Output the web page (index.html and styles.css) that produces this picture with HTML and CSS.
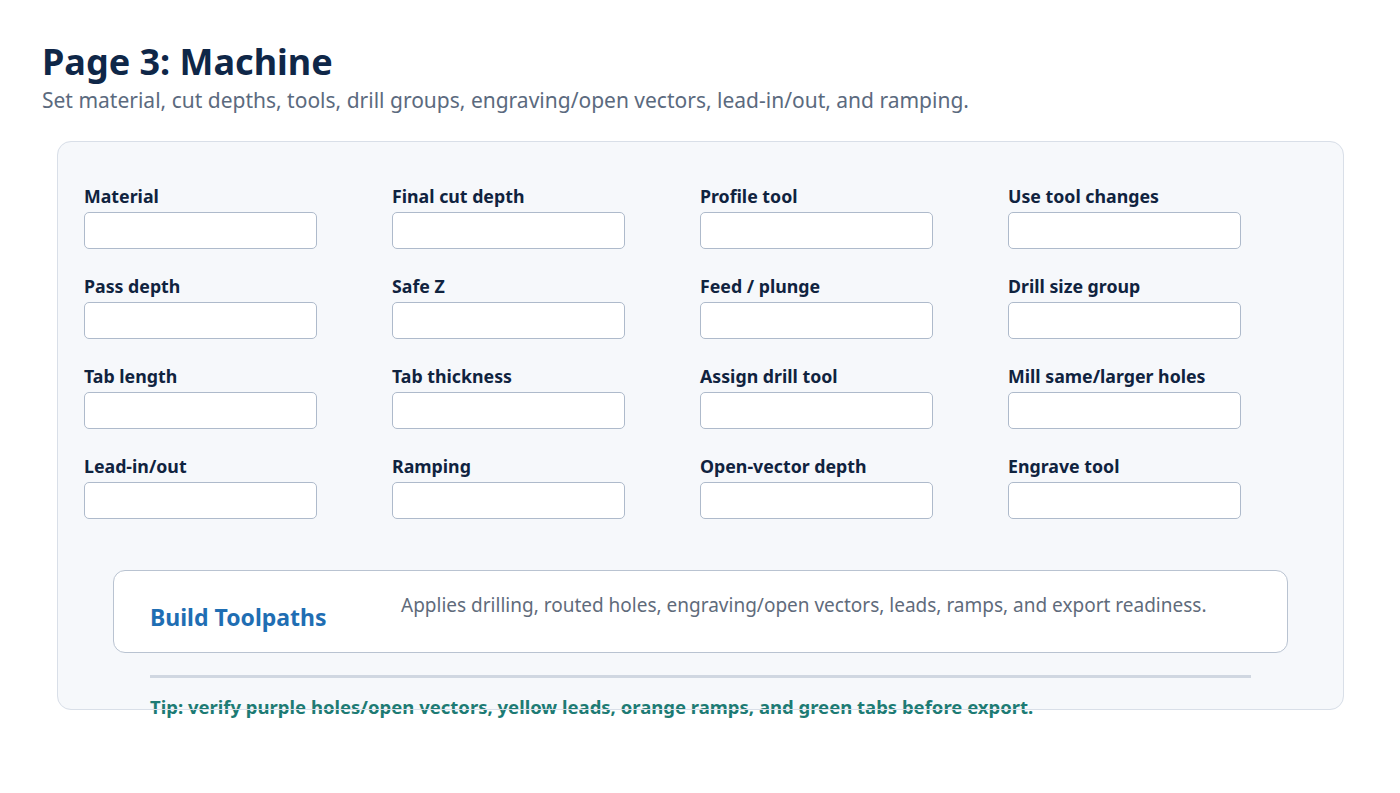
FILE: index.html
```html
<!DOCTYPE html>
<html lang="en">
<head>
    <meta charset="UTF-8">
    <meta name="viewport" content="width=device-width, initial-scale=1.0">
    <title>Page 3: Machine</title>
    <link rel="stylesheet" href="styles.css">
</head>
<body>
    <div class="page">
        <h1 class="title">Page 3: Machine</h1>
        <p class="subtitle">Set material, cut depths, tools, drill groups, engraving/open vectors, lead-in/out, and ramping.</p>

        <div class="panel">
            <!-- Machine settings -->
            <div class="fields">
                <label class="field"><span>Material</span><input type="text"></label>
                <label class="field"><span>Final cut depth</span><input type="text"></label>
                <label class="field"><span>Profile tool</span><input type="text"></label>
                <label class="field"><span>Use tool changes</span><input type="text"></label>

                <label class="field"><span>Pass depth</span><input type="text"></label>
                <label class="field"><span>Safe Z</span><input type="text"></label>
                <label class="field"><span>Feed / plunge</span><input type="text"></label>
                <label class="field"><span>Drill size group</span><input type="text"></label>

                <label class="field"><span>Tab length</span><input type="text"></label>
                <label class="field"><span>Tab thickness</span><input type="text"></label>
                <label class="field"><span>Assign drill tool</span><input type="text"></label>
                <label class="field"><span>Mill same/larger holes</span><input type="text"></label>

                <label class="field"><span>Lead-in/out</span><input type="text"></label>
                <label class="field"><span>Ramping</span><input type="text"></label>
                <label class="field"><span>Open-vector depth</span><input type="text"></label>
                <label class="field"><span>Engrave tool</span><input type="text"></label>
            </div>

            <!-- Build action -->
            <div class="build">
                <h3 class="build-title">Build Toolpaths</h3>
                <p class="build-desc">Applies drilling, routed holes, engraving/open vectors, leads, ramps, and export readiness.</p>
            </div>

            <div class="divider"></div>
            <p class="tip">Tip: verify purple holes/open vectors, yellow leads, orange ramps, and green tabs before export.</p>
        </div>
    </div>
</body>
</html>
```

FILE: styles.css
```css
html, body {
    min-height: 100%;
}
body {
    margin: 0;
    font-family: 'Noto Sans', 'Open Sans', sans-serif;
    background-color: #fff;
}
.page {
    padding: 38px 56px 84px 42px;
}
.title {
    margin: 0;
    font-size: 36px;
    line-height: 48px;
    font-weight: bold;
    color: #0f2748;
}
.subtitle {
    margin: 0;
    font-size: 21px;
    line-height: 28px;
    color: #5b6a7e;
}
.panel {
    position: relative;
    box-sizing: border-box;
    height: 569px;
    margin: 27px 0 0 15px;
    padding: 45px 27px 0;
    background: #f6f8fb;
    border-radius: 14px;
}
/* border sits on top, so the tip line runs under it */
.panel::after {
    content: '';
    position: absolute;
    inset: 0;
    border: 1px solid #d9dfe8;
    border-radius: 14px;
    pointer-events: none;
}
.fields {
    display: grid;
    grid-template-columns: repeat(4, 233px);
    column-gap: 75px;
    row-gap: 27px;
}
.field {
    display: flex;
    flex-direction: column;
    gap: 6px;
}
.field span {
    font-size: 17.75px;
    line-height: 20px;
    font-weight: bold;
    color: #10233f;
}
.field input {
    box-sizing: border-box;
    height: 37px;
    margin: 0;
    border: 1px solid #aebacb;
    border-radius: 5px;
    background: #fff;
}
.build {
    display: flex;
    align-items: flex-start;
    box-sizing: border-box;
    height: 83px;
    margin: 51px 29px 0;
    padding: 21px 36px 0;
    background: #fff;
    border: 1px solid #b9c3d1;
    border-radius: 12px;
}
.build-title {
    flex: none;
    width: 251px;
    margin: 10px 0 0;
    font-size: 23px;
    line-height: 30px;
    font-weight: bold;
    color: #1f6eb3;
}
.build-desc {
    margin: 0;
    font-size: 19px;
    line-height: 26px;
    color: #5f6b7b;
}
.divider {
    height: 3px;
    margin: 22px 66px 0;
    background: #d0d7e1;
}
.tip {
    margin: 17px 0 0 66px;
    font-size: 18.5px;
    line-height: 24px;
    font-weight: bold;
    color: #1d7b74;
}
```
